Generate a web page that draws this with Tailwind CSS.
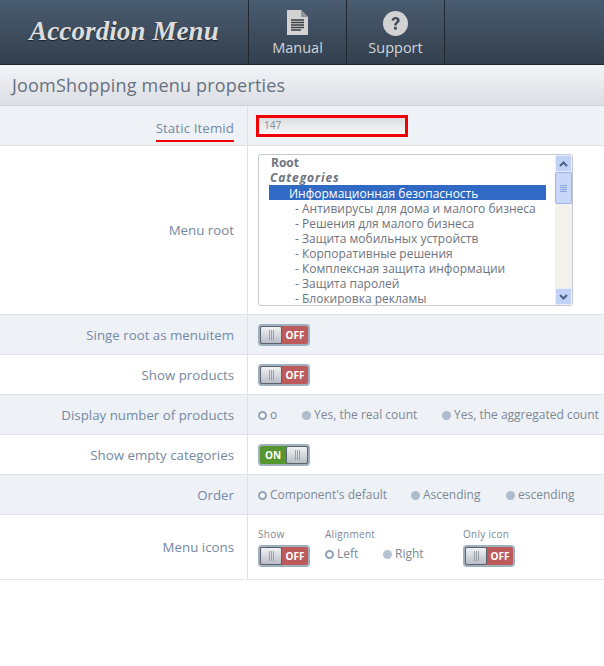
<!DOCTYPE html>
<html lang="en">
<head>
    <meta charset="UTF-8">
    <title>JoomShopping menu properties</title>
    <script src="https://cdn.jsdelivr.net/npm/@tailwindcss/browser@4"></script>
</head>
<body class="bg-white font-['Open_Sans',sans-serif] text-[13.3px] text-[#6c7a8a] w-[604px] h-[666px] overflow-hidden">
    <!-- Top bar -->
    <div class="h-[65px] flex bg-gradient-to-b from-[#4a5c70] to-[#333f4d] border-b border-[#1e252d] shadow-[0_1px_3px_#00000066]">
        <div class="w-[248px] flex items-center justify-center pb-[1px]">
            <span class="font-['Liberation_Serif',serif] italic font-bold text-[27px] tracking-[0.1px] text-[#dddddd] [text-shadow:0_1px_1px_#1a2028]">Accordion Menu</span>
        </div>
        <div class="w-[99px] h-[64px] flex flex-col items-center border-l border-r border-[#1f2730] pt-[10px]">
            <svg width="22" height="25" viewBox="0 0 22 25"><path d="M0 0H14L21 7V25H0Z" fill="#d2d2d2"/><path d="M14 0L21 7H14Z" fill="#8f959b"/><path d="M4 10H17M4 12.500H17M4 15H17M4 17.500H17M4 20H14" stroke="#3a3f45" stroke-width="1.300"/></svg>
            <span class="text-[14.5px] leading-[20px] text-[#d3d6d9] mt-[3px]">Manual</span>
        </div>
        <div class="w-[98px] h-[64px] flex flex-col items-center border-r border-[#1f2730] pt-[11px]">
            <svg width="25" height="25" viewBox="0 0 25 25"><circle cx="12.500" cy="12.500" r="12.500" fill="#d2d2d2"/><path d="M8.500 9.500C8.800 7.200 10.500 6 12.600 6C15 6 16.700 7.400 16.700 9.400C16.700 12 13.600 12 13.600 14.500H11.200C11.200 11.200 14 11 14 9.500C14 8.700 13.400 8.200 12.500 8.200C11.600 8.200 11 8.800 10.900 9.800Z" fill="#3f4954"/><rect x="11.100" y="15.800" width="2.700" height="2.800" fill="#3f4954"/></svg>
            <span class="text-[14.5px] leading-[20px] text-[#d3d6d9] mt-[2px]">Support</span>
        </div>
    </div>

    <!-- Section title -->
    <div class="h-[41px] pl-[12px] flex items-center bg-gradient-to-b from-[#f3f4f7] to-[#dcdee4] border-b border-[#ced3d9] text-[18px] tracking-[0.2px] text-[#66727f]">JoomShopping menu properties</div>

    <!-- Static Itemid -->
    <div class="flex h-[40px] bg-[#eef2f7] border-b border-[#dde1e6]">
        <div class="w-[248px] border-r border-[#dde1e6] flex items-center justify-end pr-[13px] text-[#7489a3]">
            <span class="border-b-2 border-[#ee0000] leading-[24px] mt-[6px] tracking-[0.1px]">Static Itemid</span>
        </div>
        <div class="flex-1 pl-[8px] flex items-center">
            <div class="w-[152px] h-[22px] border-[3px] border-[#f00000] bg-gradient-to-b from-[#dcdde1] to-[#f8f8fa] pl-[5px] text-[10px] leading-[15px] text-[#858c96]">147</div>
        </div>
    </div>

    <!-- Menu root -->
    <div class="flex h-[169px] border-b border-[#dde1e6]">
        <div class="w-[248px] border-r border-[#dde1e6] flex items-center justify-end pr-[13px] pt-[2px] text-[#7489a3]">Menu root</div>
        <div class="flex-1 pl-[10px] pt-[8px]">
            <div class="w-[315px] h-[152px] flex border border-[#c5c8cc] rounded-[3px] overflow-hidden">
                <div class="flex-1 pl-[10px] pr-[9px] text-[12px] text-[#6d7480] whitespace-nowrap overflow-hidden">
                    <div class="h-[14px] pl-[2px] font-bold leading-[15px]">Root</div>
                    <div class="h-[16px] pl-[1px] font-bold italic leading-[18px] tracking-[0.9px]">Categories</div>
                    <div class="h-[15px] leading-[17px] bg-[#316ac5] text-white pl-[20px]">Информационная безопасность</div>
                    <div class="h-[15px] leading-[17px] pl-[26px]">- Антивирусы для дома и малого бизнеса</div>
                    <div class="h-[15px] leading-[17px] pl-[26px]">- Решения для малого бизнеса</div>
                    <div class="h-[15px] leading-[17px] pl-[26px]">- Защита мобильных устройств</div>
                    <div class="h-[15px] leading-[17px] pl-[26px]">- Корпоративные решения</div>
                    <div class="h-[15px] leading-[17px] pl-[26px]">- Комплексная защита информации</div>
                    <div class="h-[15px] leading-[17px] pl-[26px]">- Защита паролей</div>
                    <div class="h-[15px] leading-[17px] pl-[26px]">- Блокировка рекламы</div>
                </div>
                <div class="w-[17px] flex flex-col bg-[#f3f2ec]">
                    <div class="h-[17px] rounded-[2px] border border-[#e8eefc] bg-[#c2d2f7] flex items-center justify-center">
                        <svg width="9" height="6" viewBox="0 0 9 6"><path d="M1 5L4.500 1.500L8 5" fill="none" stroke="#4d6185" stroke-width="2"/></svg>
                    </div>
                    <div class="h-[32px] rounded-[2px] border border-[#9fb5ea] bg-[#c9d7fb] flex flex-col items-center justify-center gap-[1px]">
                        <span class="w-[7px] h-[1px] bg-[#8ba3d8]"></span><span class="w-[7px] h-[1px] bg-[#8ba3d8]"></span><span class="w-[7px] h-[1px] bg-[#8ba3d8]"></span><span class="w-[7px] h-[1px] bg-[#8ba3d8]"></span>
                    </div>
                    <div class="flex-1"></div>
                    <div class="h-[17px] rounded-[2px] border border-[#e8eefc] bg-[#c2d2f7] flex items-center justify-center">
                        <svg width="9" height="6" viewBox="0 0 9 6"><path d="M1 1L4.500 4.500L8 1" fill="none" stroke="#4d6185" stroke-width="2"/></svg>
                    </div>
                </div>
            </div>
        </div>
    </div>

    <!-- Singe root -->
    <div class="flex h-[40px] bg-[#eef2f7] border-b border-[#dde1e6]">
        <div class="w-[248px] border-r border-[#dde1e6] flex items-center justify-end pr-[13px] pt-[2px] text-[#7489a3]">Singe root as menuitem</div>
        <div class="flex-1 pl-[10px] flex items-center">
            <div class="w-[52px] h-[22px] border-[2px] border-[#9fb0bf] rounded-[4px] flex overflow-hidden bg-[#bc5a5c]">
                <div class="w-[22px] border border-[#59636e] rounded-[2px] bg-gradient-to-b from-[#f1f2f5] to-[#b9bdc6] flex items-center justify-center gap-[1px]"><i class="w-[1px] h-[10px] bg-[#9aa0a8]"></i><i class="w-[1px] h-[10px] bg-[#9aa0a8]"></i><i class="w-[1px] h-[10px] bg-[#9aa0a8]"></i></div>
                <div class="flex-1 text-center text-[10px] font-bold leading-[18px] text-white">OFF</div>
            </div>
        </div>
    </div>

    <!-- Show products -->
    <div class="flex h-[40px] border-b border-[#dde1e6]">
        <div class="w-[248px] border-r border-[#dde1e6] flex items-center justify-end pr-[13px] pt-[2px] text-[#7489a3]">Show products</div>
        <div class="flex-1 pl-[10px] flex items-center">
            <div class="w-[52px] h-[22px] border-[2px] border-[#9fb0bf] rounded-[4px] flex overflow-hidden bg-[#bc5a5c]">
                <div class="w-[22px] border border-[#59636e] rounded-[2px] bg-gradient-to-b from-[#f1f2f5] to-[#b9bdc6] flex items-center justify-center gap-[1px]"><i class="w-[1px] h-[10px] bg-[#9aa0a8]"></i><i class="w-[1px] h-[10px] bg-[#9aa0a8]"></i><i class="w-[1px] h-[10px] bg-[#9aa0a8]"></i></div>
                <div class="flex-1 text-center text-[10px] font-bold leading-[18px] text-white">OFF</div>
            </div>
        </div>
    </div>

    <!-- Display number -->
    <div class="flex h-[40px] bg-[#eef2f7] border-b border-[#dde1e6]">
        <div class="w-[248px] border-r border-[#dde1e6] flex items-center justify-end pr-[13px] pt-[2px] text-[#7489a3]">Display number of products</div>
        <div class="flex-1 pl-[10px] pt-[1px] flex items-center text-[12px] text-[#7c8794] whitespace-nowrap">
            <span class="w-[9px] h-[9px] rounded-full border-[2px] border-[#8fa1b3] bg-white mr-[3px]"></span><span class="w-[32px]">o</span>
            <span class="w-[9px] h-[9px] rounded-full bg-[#aebccb] mr-[3px]"></span><span class="w-[128px]">Yes, the real count</span>
            <span class="w-[9px] h-[9px] rounded-full bg-[#aebccb] mr-[3px]"></span><span>Yes, the aggregated count</span>
        </div>
    </div>

    <!-- Show empty -->
    <div class="flex h-[40px] border-b border-[#dde1e6]">
        <div class="w-[248px] border-r border-[#dde1e6] flex items-center justify-end pr-[13px] pt-[2px] text-[#7489a3]">Show empty categories</div>
        <div class="flex-1 pl-[10px] flex items-center">
            <div class="w-[52px] h-[22px] border-[2px] border-[#9fb0bf] rounded-[4px] flex overflow-hidden bg-[#56962f]">
                <div class="flex-1 text-center text-[10px] font-bold leading-[18px] text-white">ON</div>
                <div class="w-[22px] border border-[#59636e] rounded-[2px] bg-gradient-to-b from-[#f1f2f5] to-[#b9bdc6] flex items-center justify-center gap-[1px]"><i class="w-[1px] h-[10px] bg-[#9aa0a8]"></i><i class="w-[1px] h-[10px] bg-[#9aa0a8]"></i><i class="w-[1px] h-[10px] bg-[#9aa0a8]"></i></div>
            </div>
        </div>
    </div>

    <!-- Order -->
    <div class="flex h-[40px] bg-[#eef2f7] border-b border-[#dde1e6]">
        <div class="w-[248px] border-r border-[#dde1e6] flex items-center justify-end pr-[13px] pt-[2px] text-[#7489a3]">Order</div>
        <div class="flex-1 pl-[10px] pt-[1px] flex items-center text-[12px] text-[#7c8794] whitespace-nowrap">
            <span class="w-[9px] h-[9px] rounded-full border-[2px] border-[#8fa1b3] bg-white mr-[3px]"></span><span class="w-[141px]">Component's default</span>
            <span class="w-[9px] h-[9px] rounded-full bg-[#aebccb] mr-[3px]"></span><span class="w-[83px]">Ascending</span>
            <span class="w-[9px] h-[9px] rounded-full bg-[#aebccb] mr-[3px]"></span><span>escending</span>
        </div>
    </div>

    <!-- Menu icons -->
    <div class="flex h-[65px] border-b border-[#e3e6ea]">
        <div class="w-[248px] border-r border-[#dde1e6] flex items-center justify-end pr-[13px] pt-[1px] text-[#7489a3]">Menu icons</div>
        <div class="flex-1 pl-[10px] pt-[13px] flex text-[#7c8794]">
            <div class="w-[67px]">
                <div class="text-[10px] tracking-[0.3px] leading-[13px]">Show</div>
                <div class="w-[52px] h-[22px] mt-[4px] border-[2px] border-[#9fb0bf] rounded-[4px] flex overflow-hidden bg-[#bc5a5c]">
                    <div class="w-[22px] border border-[#59636e] rounded-[2px] bg-gradient-to-b from-[#f1f2f5] to-[#b9bdc6] flex items-center justify-center gap-[1px]"><i class="w-[1px] h-[10px] bg-[#9aa0a8]"></i><i class="w-[1px] h-[10px] bg-[#9aa0a8]"></i><i class="w-[1px] h-[10px] bg-[#9aa0a8]"></i></div>
                    <div class="flex-1 text-center text-[10px] font-bold leading-[18px] text-white">OFF</div>
                </div>
            </div>
            <div class="w-[138px]">
                <div class="text-[10px] tracking-[0.3px] leading-[13px]">Alignment</div>
                <div class="flex items-center text-[12px] leading-[16px] mt-[5px]">
                    <span class="w-[9px] h-[9px] rounded-full border-[2px] border-[#8fa1b3] bg-white mr-[3px]"></span><span class="w-[46px]">Left</span>
                    <span class="w-[9px] h-[9px] rounded-full bg-[#b5c3d0] mr-[3px]"></span><span>Right</span>
                </div>
            </div>
            <div>
                <div class="text-[10px] tracking-[0.3px] leading-[13px]">Only icon</div>
                <div class="w-[52px] h-[22px] mt-[4px] border-[2px] border-[#9fb0bf] rounded-[4px] flex overflow-hidden bg-[#bc5a5c]">
                    <div class="w-[22px] border border-[#59636e] rounded-[2px] bg-gradient-to-b from-[#f1f2f5] to-[#b9bdc6] flex items-center justify-center gap-[1px]"><i class="w-[1px] h-[10px] bg-[#9aa0a8]"></i><i class="w-[1px] h-[10px] bg-[#9aa0a8]"></i><i class="w-[1px] h-[10px] bg-[#9aa0a8]"></i></div>
                    <div class="flex-1 text-center text-[10px] font-bold leading-[18px] text-white">OFF</div>
                </div>
            </div>
        </div>
    </div>
</body>
</html>
